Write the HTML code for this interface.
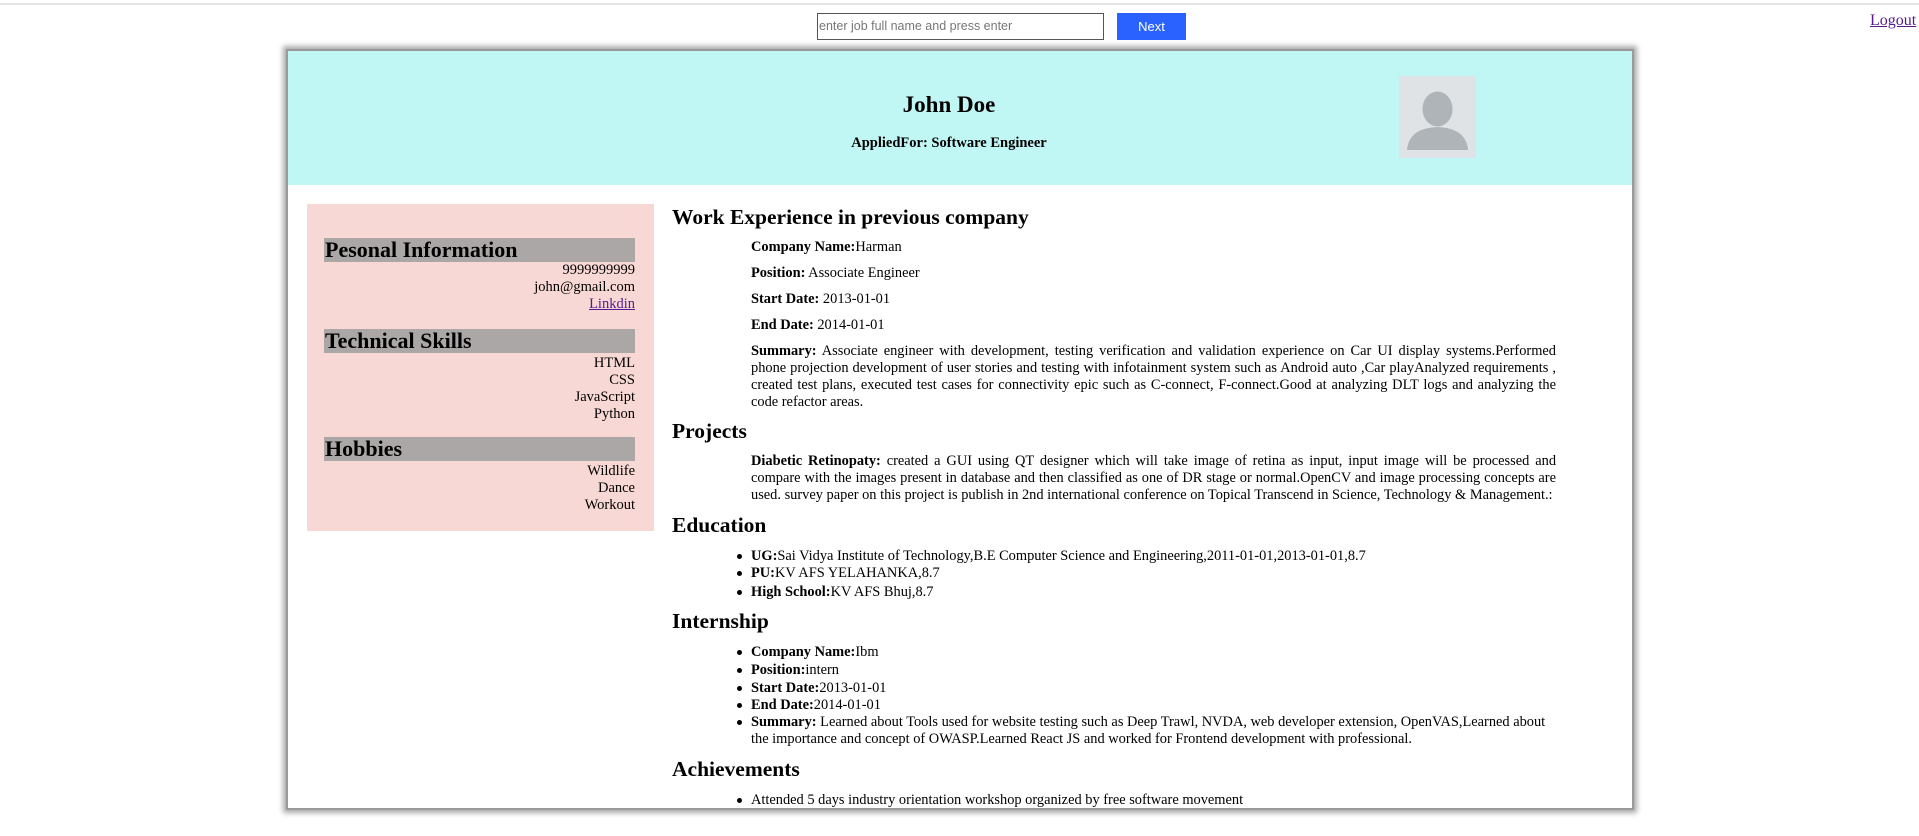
<!DOCTYPE html>
<html><head><meta charset="utf-8"><style>
*{margin:0;padding:0;box-sizing:border-box}
body{width:1919px;height:836px;overflow:hidden;background:#fff;font-family:"Liberation Serif",serif;font-size:16px;color:#000;position:relative}
.abs{position:absolute}
.topline{left:0;top:3px;width:1919px;height:2px;background:#e4e4e4}
.inp{left:817px;top:13px;width:287px;height:27px;border:1px solid #555;font-family:"Liberation Sans",sans-serif;font-size:12.5px;color:#777;padding:5px 1px;line-height:15px}
.btn{left:1117px;top:13px;width:69px;height:27px;background:#2a62ff;color:#fff;font-family:"Liberation Sans",sans-serif;font-size:13px;text-align:center;line-height:27px}
.logout{left:1870px;top:12px;color:#551a8b;text-decoration:underline;font-size:16px}
.card{left:286px;top:49px;width:1348px;height:761px;border:2px solid #999;box-shadow:0 0 5px 3px #aaa;overflow:hidden;background:#fff}
.hdr{left:0;top:0;width:1344px;height:134px;background:#c0f7f5}
.name{left:0;width:1322px;text-align:center;top:41px;font-weight:bold;font-size:23px}
.app{left:0;width:1322px;text-align:center;top:84px;font-weight:bold;font-size:14.5px}
.av{left:1111px;top:25px;width:77px;height:82px;background:#dfe3e5;overflow:hidden}
.side{left:307px;top:204px;width:347px;height:327px;background:#f8d8d4}
.bar{left:324px;width:311px;height:24px;background:#aba7a6;font-weight:bold;font-size:22px;line-height:24px;padding-left:1px}
.r{right:1284px;text-align:right;line-height:17px;font-size:14.5px}
.h{left:672px;font-weight:bold;font-size:21.5px;line-height:26px}
.p{left:751px;width:805px;font-size:14.4px;line-height:17px;text-align:justify}
b{font-weight:bold}
.li{left:751px;width:805px;font-size:14.4px;line-height:17.5px}
.li::before{content:"";position:absolute;left:-14px;top:6px;width:5px;height:5px;border-radius:50%;background:#000}
a{color:#551a8b;text-decoration:underline}
</style></head><body>
<div class="abs topline"></div>
<div class="abs inp">enter job full name and press enter</div>
<div class="abs btn">Next</div>
<div class="abs logout">Logout</div>
<div class="abs card">
 <div class="abs hdr">
  <div class="abs name">John Doe</div>
  <div class="abs app">AppliedFor: Software Engineer</div>
  <div class="abs av"><svg width="77" height="82" viewBox="0 0 77 82"><ellipse cx="38.5" cy="33" rx="15" ry="17.5" fill="#aeb4b8"/><path d="M8 74 Q10 52 38.5 51 Q67 52 69 74 Z" fill="#aeb4b8"/></svg></div>
 </div>
</div>
<div class="abs side"></div>
<div class="abs bar" style="top:238px">Pesonal Information</div>
<div class="abs r" style="top:262px">9999999999</div>
<div class="abs r" style="top:279px">john@gmail.com</div>
<div class="abs r" style="top:296px"><a>Linkdin</a></div>
<div class="abs bar" style="top:329px">Technical Skills</div>
<div class="abs r" style="top:355px">HTML</div>
<div class="abs r" style="top:372px">CSS</div>
<div class="abs r" style="top:389px">JavaScript</div>
<div class="abs r" style="top:406px">Python</div>
<div class="abs bar" style="top:437px">Hobbies</div>
<div class="abs r" style="top:463px">Wildlife</div>
<div class="abs r" style="top:480px">Dance</div>
<div class="abs r" style="top:497px">Workout</div>

<div class="abs h" style="top:204px">Work Experience in previous company</div>
<div class="abs p" style="top:239px"><b>Company Name:</b>Harman</div>
<div class="abs p" style="top:265px"><b>Position:</b> Associate Engineer</div>
<div class="abs p" style="top:291px"><b>Start Date:</b> 2013-01-01</div>
<div class="abs p" style="top:317px"><b>End Date:</b> 2014-01-01</div>
<div class="abs p" style="top:343px"><b>Summary:</b> Associate engineer with development, testing verification and validation experience on Car UI display systems.Performed phone projection development of user stories and testing with infotainment system such as Android auto ,Car playAnalyzed requirements , created test plans, executed test cases for connectivity epic such as C-connect, F-connect.Good at analyzing DLT logs and analyzing the code refactor areas.</div>
<div class="abs h" style="top:418px">Projects</div>
<div class="abs p" style="top:453px"><b>Diabetic Retinopaty:</b> created a GUI using QT designer which will take image of retina as input, input image will be processed and compare with the images present in database and then classified as one of DR stage or normal.OpenCV and image processing concepts are used. survey paper on this project is publish in 2nd international conference on Topical Transcend in Science, Technology &amp; Management.:</div>
<div class="abs h" style="top:512px">Education</div>
<div class="abs li" style="top:548px"><b>UG:</b>Sai Vidya Institute of Technology,B.E Computer Science and Engineering,2011-01-01,2013-01-01,8.7</div>
<div class="abs li" style="top:565px"><b>PU:</b>KV AFS YELAHANKA,8.7</div>
<div class="abs li" style="top:584px"><b>High School:</b>KV AFS Bhuj,8.7</div>
<div class="abs h" style="top:608px">Internship</div>
<div class="abs li" style="top:644px"><b>Company Name:</b>Ibm</div>
<div class="abs li" style="top:662px"><b>Position:</b>intern</div>
<div class="abs li" style="top:680px"><b>Start Date:</b>2013-01-01</div>
<div class="abs li" style="top:697px"><b>End Date:</b>2014-01-01</div>
<div class="abs li" style="top:714px;line-height:17px"><b>Summary:</b> Learned about Tools used for website testing such as Deep Trawl, NVDA, web developer extension, OpenVAS,Learned about the importance and concept of OWASP.Learned React JS and worked for Frontend development with professional.</div>
<div class="abs h" style="top:756px">Achievements</div>
<div class="abs li" style="top:792px">Attended 5 days industry orientation workshop organized by free software movement</div>
</body></html>
